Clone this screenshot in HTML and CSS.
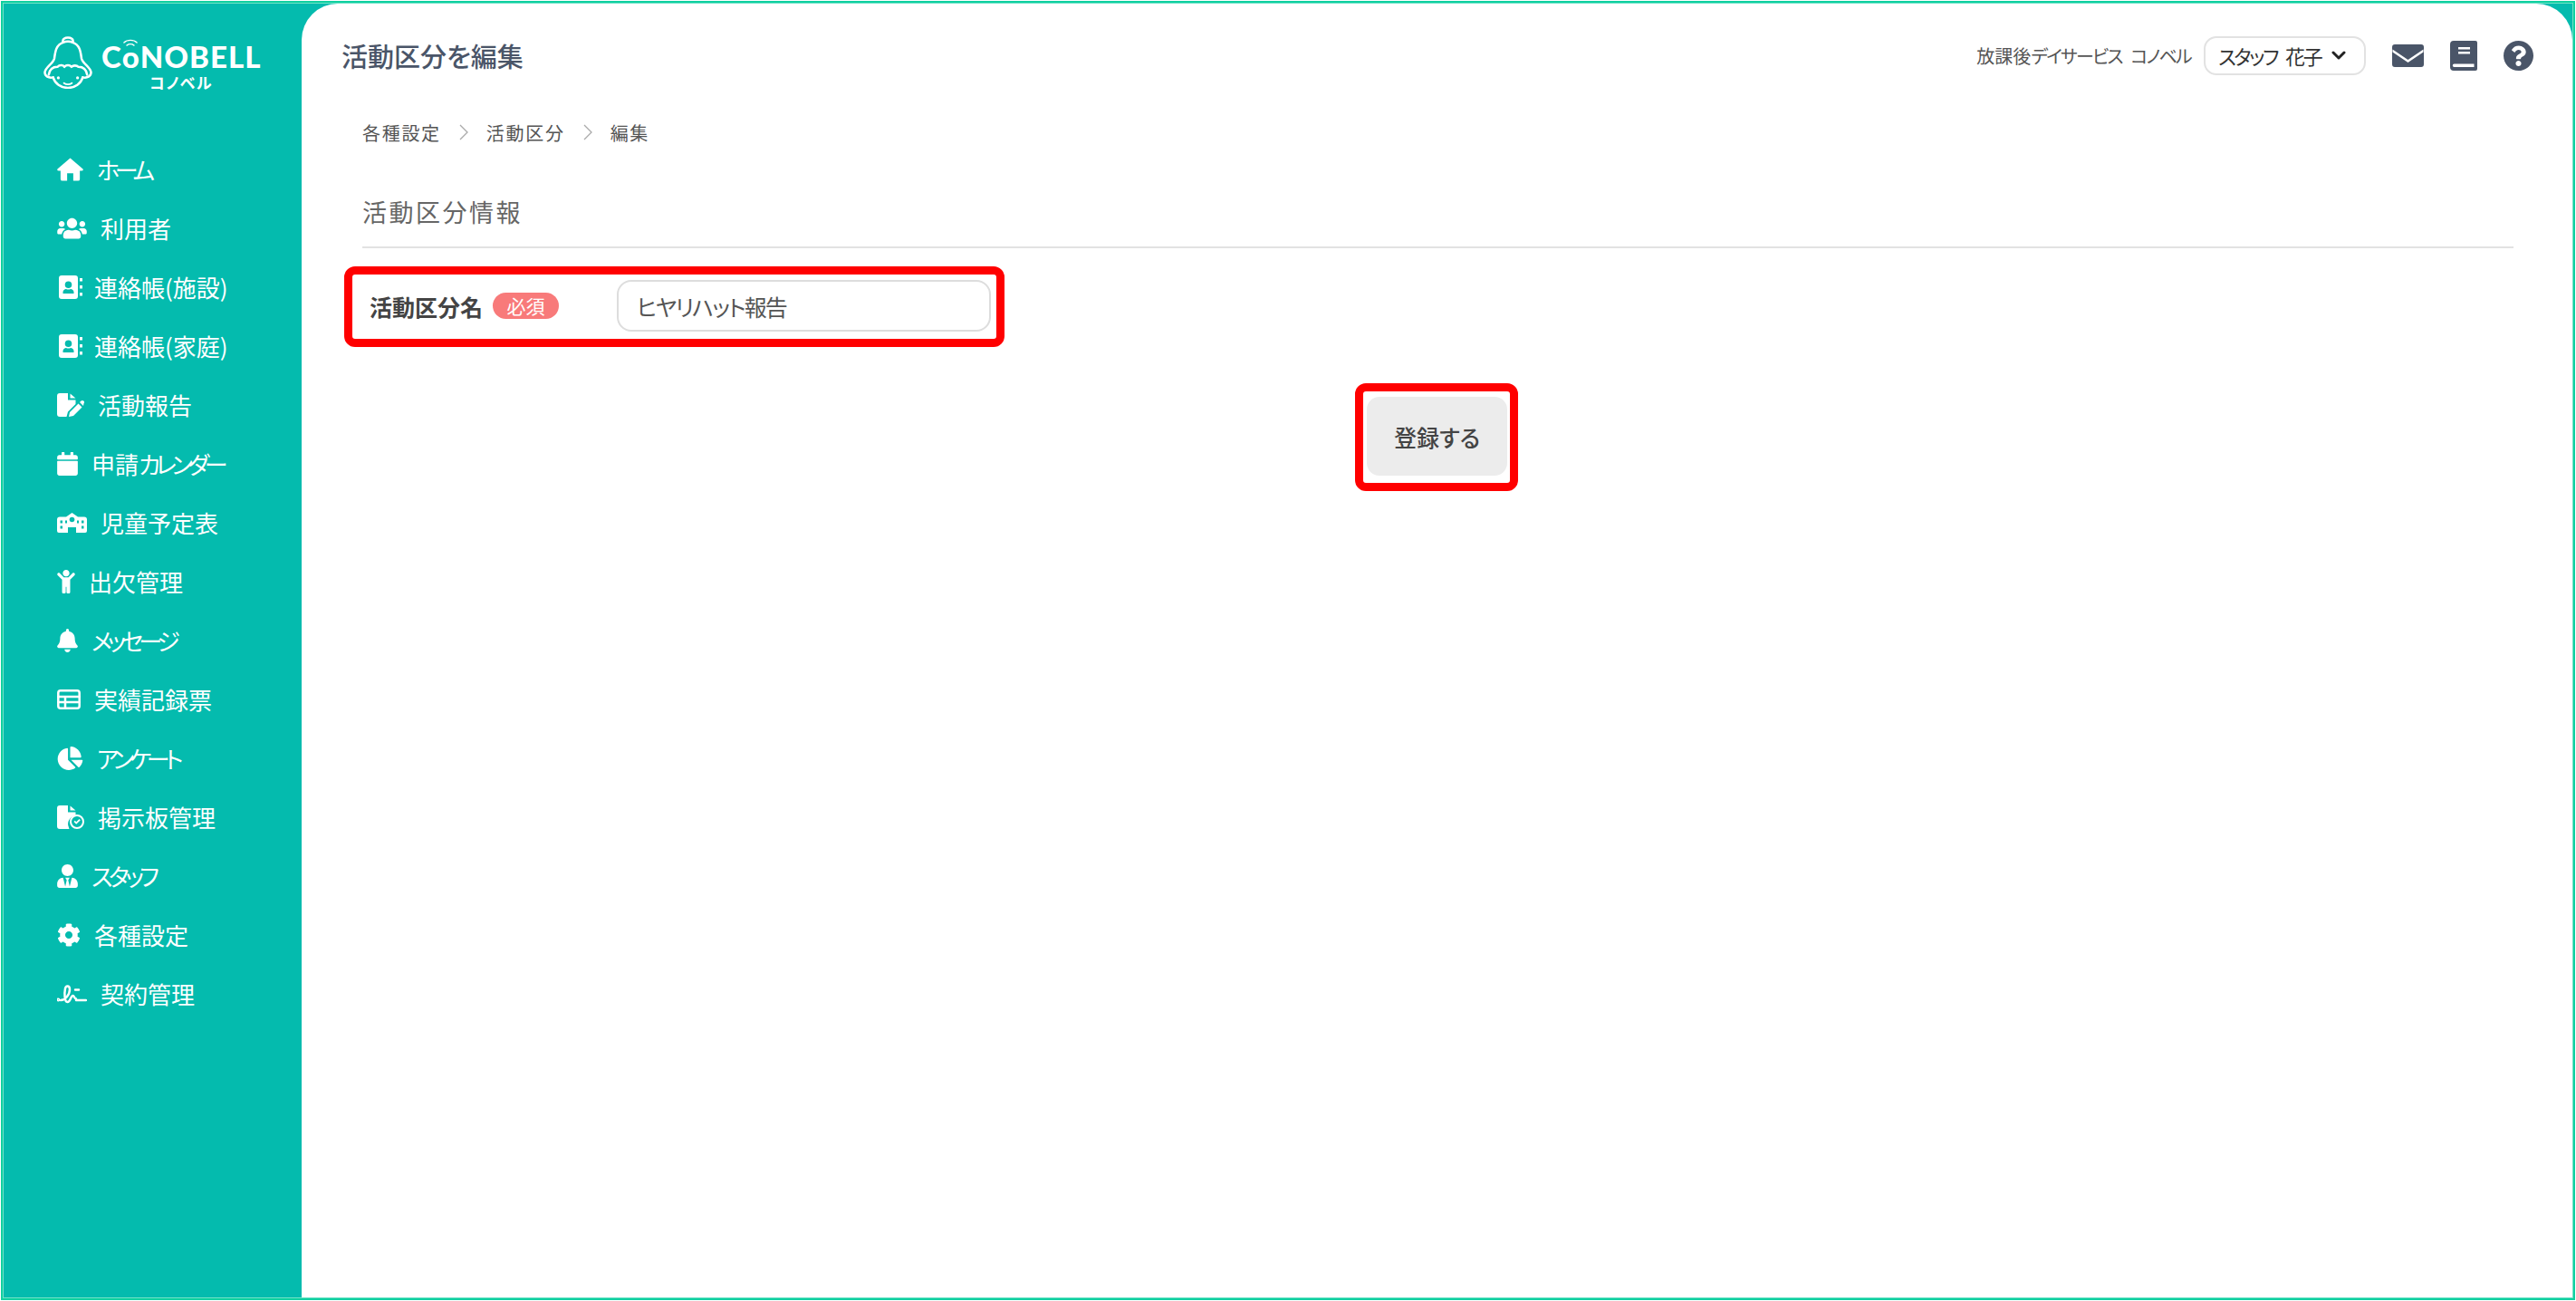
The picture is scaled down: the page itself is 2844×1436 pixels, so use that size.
FILE: index.html
```html
<!DOCTYPE html>
<html lang="ja">
<head>
<meta charset="utf-8">
<title>活動区分を編集</title>
<link rel="stylesheet" href="styles.css">
</head>
<body>
<div class="frame">
  <div class="inner">
    <aside class="sidebar">
      <div class="logo">
        <svg class="logo-bell" viewBox="0 0 56 60" fill="none" stroke="currentColor" stroke-width="2.6" stroke-linecap="round" stroke-linejoin="round">
          <path d="M22.5 7C14 10 13.5 18 12.5 25C11.5 31 2.5 35 1.5 41C1.5 46 6 48 11 47"/>
          <path d="M33.5 7C42 10 42.500 18 43.500 25C44.500 31 53.500 35 54.500 41C54.500 46 50 48 45 47"/>
          <path d="M22.500 7C21 3 25 1.500 28 1.500C31 1.500 35 3 33.500 7C30 5.500 26 5.500 22.500 7Z"/>
          <path d="M6 44C7 38 11 35 16 35C19 32 23 33 24 35C26 32.500 30 32.500 32 35C34 33 38 33 40 35C45 35 49 38 50 44"/>
          <path d="M11 47C13 54 20 59 28 59C36 59 43 54 45 47"/>
          <circle cx="17" cy="47.500" r="1.700" fill="currentColor" stroke="none"/>
          <circle cx="39" cy="47.500" r="1.700" fill="currentColor" stroke="none"/>
          <path d="M23.500 53.500C26 55.500 30 55.500 32.500 53.500" stroke-width="2"/>
        </svg>
        <div class="logo-text">
          <div class="logo-main">
            <span>C</span><span class="logo-o">o<svg class="logo-wifi" viewBox="0 0 18 9" fill="none" stroke="currentColor" stroke-width="1.500" stroke-linecap="round"><path d="M1 4.500C5 .5 13 .5 17 4.500"/><path d="M4.500 8C7 6 11 6 13.500 8"/></svg></span><span>NOBELL</span>
          </div>
          <div class="logo-sub">コノベル</div>
        </div>
      </div>
      <nav class="menu">
        <a class="menu-item"><svg class="ico w29" viewBox="0 0 30 26"><path d="M15 0L29.500 12.500Q30.500 14.500 28 14.500H26V24a2 2 0 0 1-2 2H18.500V17.500H11.500V26H6a2 2 0 0 1-2-2V14.500H2Q-.5 14.500 .5 12.500Z"/></svg><span class="kana">ホーム</span></a>
        <a class="menu-item"><svg class="ico w33" viewBox="0 0 640 512"><path d="M96 224c35.3 0 64-28.7 64-64s-28.7-64-64-64-64 28.7-64 64 28.7 64 64 64zm448 0c35.3 0 64-28.7 64-64s-28.7-64-64-64-64 28.7-64 64 28.7 64 64 64zm32 32h-64c-17.6 0-33.5 7.1-45.1 18.6 40.3 22.1 68.9 62 75.1 109.4h66c17.7 0 32-14.3 32-32v-32c0-35.3-28.7-64-64-64zm-256 0c61.9 0 112-50.1 112-112S381.9 32 320 32 208 82.1 208 144s50.1 112 112 112zm76.8 32h-8.3c-20.8 10-43.9 16-68.5 16s-47.6-6-68.5-16h-8.3C179.6 288 128 339.6 128 403.2V432c0 26.5 21.5 48 48 48h288c26.5 0 48-21.5 48-48v-28.8c0-63.6-51.6-115.2-115.2-115.2zm-223.7-13.4C161.500 263.1 145.6 256 128 256H64c-35.3 0-64 28.7-64 64v32c0 17.7 14.3 32 32 32h65.9c6.3-47.4 34.9-87.3 75.2-109.4z"/></svg><span>利用者</span></a>
        <a class="menu-item shift2"><svg class="ico w26" viewBox="0 0 26 26"><path fill-rule="evenodd" d="M3 0H18a3 3 0 0 1 3 3V23a3 3 0 0 1-3 3H3a3 3 0 0 1-3-3V3a3 3 0 0 1 3-3ZM10.500 6.500a3.800 3.800 0 1 0 0 7.600a3.800 3.800 0 1 0 0-7.600ZM4.500 20h12v-1.500c0-2-2-3.500-3.500-3.500c-1.600.8-3.400.8-5 0c-1.500 0-3.500 1.500-3.500 3.500Z"/><path d="M23 3h3v3.500h-3ZM23 11h3v3.500h-3ZM23 19h3v3.500h-3Z"/></svg><span>連絡帳(施設)</span></a>
        <a class="menu-item shift2"><svg class="ico w26" viewBox="0 0 26 26"><path fill-rule="evenodd" d="M3 0H18a3 3 0 0 1 3 3V23a3 3 0 0 1-3 3H3a3 3 0 0 1-3-3V3a3 3 0 0 1 3-3ZM10.500 6.500a3.800 3.800 0 1 0 0 7.600a3.800 3.800 0 1 0 0-7.600ZM4.500 20h12v-1.500c0-2-2-3.500-3.500-3.500c-1.600.8-3.400.8-5 0c-1.500 0-3.500 1.500-3.500 3.500Z"/><path d="M23 3h3v3.500h-3ZM23 11h3v3.500h-3ZM23 19h3v3.500h-3Z"/></svg><span>連絡帳(家庭)</span></a>
        <a class="menu-item"><svg class="ico w30" viewBox="0 0 30 26"><path d="M3 0H12V7.500H20.500V12L12 20.500L10.500 26H3A3 3 0 0 1 0 23V3A3 3 0 0 1 3 0Z"/><path d="M14.500 0.500L20.500 5.500H14.500Z"/><path d="M14 21L23.500 11.500L27.500 15.500L18 25L13 26ZM25 10L26.500 8.500C27.500 7.700 28.500 7.700 29.300 8.500L29.500 8.700C30.300 9.500 30.300 10.500 29.500 11.300L29 14Z"/></svg><span>活動報告</span></a>
        <a class="menu-item"><svg class="ico w23" viewBox="0 0 448 512"><path d="M12 192h424c6.600 0 12 5.400 12 12v260c0 26.500-21.500 48-48 48H48c-26.500 0-48-21.500-48-48V204c0-6.600 5.400-12 12-12zm436-44v-36c0-26.500-21.500-48-48-48h-48V12c0-6.600-5.400-12-12-12h-40c-6.600 0-12 5.400-12 12v52H160V12c0-6.600-5.400-12-12-12h-40c-6.600 0-12 5.400-12 12v52H48C21.500 64 0 85.500 0 112v36c0 6.600 5.400 12 12 12h424c6.600 0 12-5.400 12-12z"/></svg><span>申請<span class="kana">カレンダー</span></span></a>
        <a class="menu-item"><svg class="ico w33" viewBox="0 0 33 22"><path d="M16.500 0L23 4.500H30A3 3 0 0 1 33 7.500V20A2 2 0 0 1 31 22H21V16H12V22H2A2 2 0 0 1 0 20V7.500A3 3 0 0 1 3 4.500H10Z"/><path class="cut" d="M3.500 8.500H6V11.500H3.500ZM3.500 14.500H6V17.500H3.500ZM27 8.500H29.500V11.500H27ZM27 14.500H29.500V17.500H27ZM9 8.500H11V11.500H9ZM22 8.500H24V11.500H22Z"/><circle class="cut" cx="16.500" cy="7.500" r="2.800"/></svg><span>児童予定表</span></a>
        <a class="menu-item"><svg class="ico w20" viewBox="0 0 384 512"><path d="M120 72c0-39.765 32.235-72 72-72s72 32.235 72 72c0 39.764-32.235 72-72 72s-72-32.236-72-72zm254.627 1.373c-12.496-12.497-32.758-12.497-45.254 0L242.745 160H141.254L54.627 73.373c-12.496-12.497-32.758-12.497-45.254 0-12.497 12.497-12.497 32.758 0 45.255L104 213.254V480c0 17.673 14.327 32 32 32h16c17.673 0 32-14.327 32-32V368h16v112c0 17.673 14.327 32 32 32h16c17.673 0 32-14.327 32-32V213.254l94.627-94.627c12.497-12.497 12.497-32.757 0-45.254z"/></svg><span>出欠管理</span></a>
        <a class="menu-item"><svg class="ico w23" viewBox="0 0 448 512"><path d="M224 512c35.320 0 63.970-28.650 63.970-64H160.030c0 35.350 28.650 64 63.970 64zm215.390-149.710c-19.320-20.760-55.470-51.990-55.470-154.290 0-77.700-54.480-139.900-127.940-155.160V32c0-17.670-14.320-32-31.980-32s-31.980 14.330-31.980 32v20.840C118.560 68.100 64.080 130.300 64.080 208c0 102.300-36.150 133.530-55.470 154.290-6 6.450-8.660 14.160-8.610 21.710.11 16.400 12.980 32 32.100 32h383.800c19.120 0 32-15.600 32.100-32 .05-7.550-2.610-15.270-8.610-21.710z"/></svg><span class="kana">メッセージ</span></a>
        <a class="menu-item"><svg class="ico outline w26" viewBox="0 0 26 22"><rect x="1.300" y="1.300" width="23.400" height="19.400" rx="2.500"/><path d="M1.300 8H24.700M1.300 14H24.700M9 8V20"/></svg><span>実績記録票</span></a>
        <a class="menu-item"><svg class="ico w29" viewBox="0 0 544 512"><path d="M527.790 288H290.500l158.030 158.030c6.040 6.040 15.980 6.530 22.190.68 38.700-36.460 65.320-85.610 73.130-140.860 1.340-9.460-6.510-17.850-16.060-17.850zm-15.830-64.800C503.720 103.740 408.260 8.280 288.800.04 279.680-.59 272 7.100 272 16.240V240h223.770c9.140 0 16.820-7.680 16.190-16.800zM224 288V50.710c0-9.550-8.390-17.400-17.840-16.060C86.990 51.490-4.100 155.600.14 280.370 4.500 408.510 114.830 513.590 243.030 511.980c50.400-.63 96.970-16.870 135.260-44.030 7.900-5.600 8.420-17.230 1.570-24.080L224 288z"/></svg><span class="kana">アンケート</span></a>
        <a class="menu-item"><svg class="ico w30" viewBox="0 0 30 26"><path d="M3 0H12V7.500H20.500V11.500A9 9 0 0 0 13 24.500L13.500 26H3A3 3 0 0 1 0 23V3A3 3 0 0 1 3 0Z"/><path d="M14.500 .5L20.500 5.500H14.500Z"/><path fill-rule="evenodd" d="M22 10a8 8 0 1 1 0 16a8 8 0 1 1 0-16ZM22 12a6 6 0 1 0 0 12a6 6 0 1 0 0-12Z"/><path d="M18.500 18L19.800 16.800L21.200 18.300L24.500 15L25.800 16.300L21.200 20.800Z"/></svg><span>掲示板管理</span></a>
        <a class="menu-item"><svg class="ico w23" viewBox="0 0 448 512"><path d="M224 256c70.700 0 128-57.300 128-128S294.700 0 224 0 96 57.300 96 128s57.300 128 128 128zm95.800 32.600L272 480l-32-136 32-56h-96l32 56-32 136-47.800-191.400C56.900 292 0 350.300 0 422.400V464c0 26.500 21.500 48 48 48h352c26.500 0 48-21.500 48-48v-41.600c0-72.100-56.900-130.400-128.200-133.800z"/></svg><span class="kana-s">スタッフ</span></a>
        <a class="menu-item"><svg class="ico w26" viewBox="0 0 512 512"><path d="M487.400 315.700l-42.600-24.600c4.300-23.200 4.300-47 0-70.200l42.600-24.600c4.900-2.800 7.100-8.600 5.500-14-11.100-35.600-30-67.800-54.700-94.600-3.800-4.100-10-5.100-14.800-2.300L380.800 110c-17.900-15.400-38.500-27.300-60.800-35.100V25.800c0-5.600-3.900-10.500-9.400-11.700-36.700-8.200-74.300-7.800-109.200 0-5.500 1.200-9.400 6.100-9.400 11.700V75c-22.200 7.900-42.800 19.800-60.800 35.100L88.700 85.500c-4.900-2.800-11-1.900-14.800 2.300-24.700 26.700-43.600 58.900-54.700 94.600-1.700 5.400.6 11.200 5.500 14L67.300 221c-4.300 23.200-4.300 47 0 70.200l-42.600 24.600c-4.900 2.800-7.100 8.600-5.500 14 11.100 35.600 30 67.800 54.700 94.600 3.800 4.100 10 5.100 14.800 2.300l42.600-24.600c17.900 15.400 38.500 27.300 60.800 35.100v49.200c0 5.600 3.900 10.500 9.400 11.700 36.700 8.200 74.300 7.800 109.200 0 5.500-1.200 9.400-6.100 9.400-11.700v-49.200c22.200-7.900 42.800-19.800 60.800-35.100l42.600 24.600c4.900 2.800 11 1.900 14.800-2.300 24.700-26.700 43.600-58.900 54.700-94.600 1.500-5.500-.7-11.300-5.600-14.100zM256 336c-44.100 0-80-35.900-80-80s35.900-80 80-80 80 35.900 80 80-35.900 80-80 80z"/></svg><span>各種設定</span></a>
        <a class="menu-item"><svg class="ico outline w33" viewBox="0 0 33 22"><circle cx="1.300" cy="17.500" r=".8"/><path d="M4 18C9 18 14 12 14 6C14 2 10 1 9 5C8 10 8 20 11.500 20C15 20 15 13 17.500 13C19 13 19 16.500 21 16.500"/><path d="M20 6.500H24M21 18H32"/></svg><span>契約管理</span></a>
      </nav>
    </aside>
    <main class="main">
      <header class="topbar">
        <h1 class="page-title">活動区分を編集</h1>
        <div class="top-right">
          <span class="facility">放課後<span class="kana-sm">デイサービス コノベル</span></span>
          <div class="user-select"><span class="kana-md">スタッフ 花子</span>
            <svg class="chev" viewBox="0 0 16 10" fill="none" stroke="currentColor" stroke-width="3" stroke-linecap="round" stroke-linejoin="round"><path d="M2 2L8 8L14 2"/></svg>
          </div>
          <div class="top-icons">
            <svg class="top-ico mail" viewBox="0 0 35 25"><path fill-rule="evenodd" d="M3 0H32A3 3 0 0 1 35 3V22A3 3 0 0 1 32 25H3A3 3 0 0 1 0 22V3A3 3 0 0 1 3 0ZM.5 5.500L17.500 17L34.500 5.500V8.500L17.500 20L.5 8.500Z"/></svg>
            <svg class="top-ico book" viewBox="0 0 30 33"><path fill-rule="evenodd" d="M4 0H28A2 2 0 0 1 30 2V31A2 2 0 0 1 28 33H4A4 4 0 0 1 0 29V4A4 4 0 0 1 4 0ZM9 7V9.500H22V7ZM9 12V14.500H22V12ZM4.500 25.500A1.700 1.700 0 0 0 4.500 29H26.500V25.500Z"/></svg>
            <svg class="top-ico help" viewBox="8 8 496 496"><path d="M504 256c0 136.997-111.043 248-248 248S8 392.997 8 256C8 119.083 119.043 8 256 8s248 111.083 248 248zM262.655 90c-54.497 0-89.255 22.957-116.549 63.758-3.536 5.286-2.353 12.415 2.715 16.258l34.699 26.310c5.205 3.947 12.621 3.008 16.665-2.122 17.864-22.658 30.113-35.797 57.303-35.797 20.429 0 45.698 13.148 45.698 32.958 0 14.976-12.363 22.667-32.534 33.976C247.128 238.528 216 254.941 216 296v4c0 6.627 5.373 12 12 12h56c6.627 0 12-5.373 12-12v-1.333c0-28.462 83.186-29.647 83.186-106.667 0-58.002-60.165-102-116.531-102zM256 338c-25.365 0-46 20.635-46 46 0 25.364 20.635 46 46 46s46-20.636 46-46c0-25.365-20.635-46-46-46z"/></svg>
          </div>
        </div>
      </header>
      <div class="content">
        <ol class="crumbs">
          <li>各種設定</li>
          <li class="sep"><svg viewBox="0 0 10 18" fill="none" stroke="currentColor" stroke-width="1.300"><path d="M1 1L9 9L1 17"/></svg></li>
          <li>活動区分</li>
          <li class="sep"><svg viewBox="0 0 10 18" fill="none" stroke="currentColor" stroke-width="1.300"><path d="M1 1L9 9L1 17"/></svg></li>
          <li>編集</li>
        </ol>
        <h2 class="section-title">活動区分情報</h2>
        <div class="form-row">
          <label class="field-label" for="name">活動区分名</label>
          <span class="badge">必須</span>
          <input class="text-input" id="name" type="text" value="ヒヤリハット報告">
          <span class="mark"></span>
        </div>
        <div class="actions">
          <button class="submit" type="button">登録する<span class="mark"></span></button>
        </div>
      </div>
    </main>
  </div>
</div>
</body>
</html>
```

FILE: styles.css
```css
* { box-sizing: border-box; }
html, body { margin: 0; height: 100%; }
body {
  background: #fff;
  padding: 1px;
  font-family: "Noto Sans CJK JP", "Noto Sans", sans-serif;
  font-feature-settings: "palt";
  color: #4a5568;
  overflow: hidden;
}
.frame {
  height: 100%;
  border: 2px solid #0fd0a0;
}
.inner {
  height: 100%;
  border: 1px solid #6fe3c6;
  background: #04bbae;
  display: flex;
}
.sidebar {
  width: 329px;
  flex: none;
  color: #fff;
}
.logo {
  display: flex;
  gap: 10px;
  padding: 36px 0 0 44px;
  height: 150px;
  align-items: flex-start;
}
.logo-bell { width: 54px; height: 58px; flex: none; }
.logo-text { display: flex; flex-direction: column; align-items: center; }
.logo-main {
  font-family: "Lato", sans-serif;
  font-weight: 900;
  font-size: 33px;
  line-height: 36px;
  margin-top: 4px;
  letter-spacing: 1px;
  display: flex;
  align-items: baseline;
}
.logo-o { position: relative; }
.logo-wifi { position: absolute; left: 1px; top: -1px; width: 16px; height: 8px; }
.logo-sub {
  font-size: 17px;
  line-height: 20px;
  font-weight: 700;
  margin-top: 1px;
  letter-spacing: 1.5px;
}
.menu { display: flex; flex-direction: column; }
.menu-item {
  height: 65px;
  padding-left: 59px;
  display: flex;
  align-items: center;
  gap: 15px;
  font-size: 26px;
  color: #fff;
  text-decoration: none;
}
.menu-item.shift2 { padding-left: 61px; gap: 13px; }
.kana { letter-spacing: -.2em; }
.kana-s { letter-spacing: -.17em; }
.kana-sm { letter-spacing: -.09em; word-spacing: .35em; }
.kana-md { letter-spacing: -.11em; word-spacing: .3em; }
.ico { height: 26px; fill: currentColor; flex: none; }
.ico.outline { fill: none; stroke: currentColor; stroke-width: 2.5; stroke-linecap: round; }
.ico .cut { fill: #04bbae; }
.w20 { width: 20px; }
.w23 { width: 23px; }
.w26 { width: 26px; }
.w29 { width: 29px; }
.w30 { width: 30px; }
.w33 { width: 33px; }

.main {
  flex: 1;
  min-width: 0;
  background: #fff;
  border-radius: 40px 40px 0 0;
}
.topbar {
  height: 114px;
  padding: 0 43px 0 44px;
  display: flex;
  align-items: center;
  justify-content: space-between;
}
.page-title {
  margin: 0;
  font-size: 29px;
  line-height: 40px;
  font-weight: 500;
  color: #4a5568;
}
.top-right { display: flex; align-items: center; }
.facility { font-size: 20px; color: #555; }
.user-select {
  margin-left: 14px;
  width: 179px;
  height: 43px;
  border: 2px solid #e2e2e2;
  border-radius: 14px;
  padding: 0 20px 0 14px;
  display: flex;
  align-items: center;
  justify-content: space-between;
  font-size: 22px;
  color: #333;
}
.chev { width: 16px; height: 10px; color: #222; }
.top-icons { margin-left: 29px; display: flex; align-items: center; gap: 29px; }
.top-ico { fill: #4a5568; display: block; }
.mail { width: 35px; height: 25px; }
.book { width: 30px; height: 33px; }
.help { width: 33px; height: 33px; }

.content { padding: 0 65px 0 67px; }
.crumbs {
  list-style: none;
  margin: 0;
  padding: 0;
  height: 56px;
  display: flex;
  align-items: center;
  gap: 20px;
  font-size: 20px;
  letter-spacing: 1.7px;
  color: #555;
}
.sep { display: flex; color: #aaa; }
.sep svg { width: 10px; height: 18px; display: block; }
.section-title {
  margin: 0;
  height: 100px;
  padding-top: 38px;
  border-bottom: 2px solid #e2e2e2;
  font-size: 27px;
  line-height: 44px;
  font-weight: 400;
  letter-spacing: 2.5px;
  color: #666;
}
.form-row {
  position: relative;
  margin-top: 35px;
  height: 57px;
  display: flex;
  align-items: center;
  padding-left: 8px;
}
.field-label { font-size: 25px; font-weight: 700; color: #444; width: 136px; flex: none; }
.badge {
  width: 73px;
  height: 29px;
  border-radius: 15px;
  background: #f87a7a;
  color: #fff;
  font-size: 21px;
  line-height: 29px;
  text-align: center;
  flex: none;
}
.text-input {
  margin-left: 64px;
  width: 413px;
  height: 57px;
  border: 2px solid #ddd;
  border-radius: 16px;
  padding: 0 20px;
  font: inherit;
  font-feature-settings: "palt";
  font-size: 25px;
  letter-spacing: -1.8px;
  color: #555;
  background: #fff;
  outline: none;
}
.mark {
  position: absolute;
  border: 9px solid #f00;
  border-radius: 12px;
  pointer-events: none;
}
.form-row .mark { left: -20px; top: -15px; width: 729px; height: 89px; }
.actions { margin-top: 72px; display: flex; justify-content: center; padding-right: 2px; }
.submit {
  position: relative;
  width: 155px;
  height: 87px;
  border: 0;
  border-radius: 14px;
  background: #ececec;
  font: inherit;
  font-feature-settings: "palt";
  font-size: 25px;
  font-weight: 500;
  color: #444;
}
.submit .mark { left: -13px; top: -15px; width: 180px; height: 119px; }
```
